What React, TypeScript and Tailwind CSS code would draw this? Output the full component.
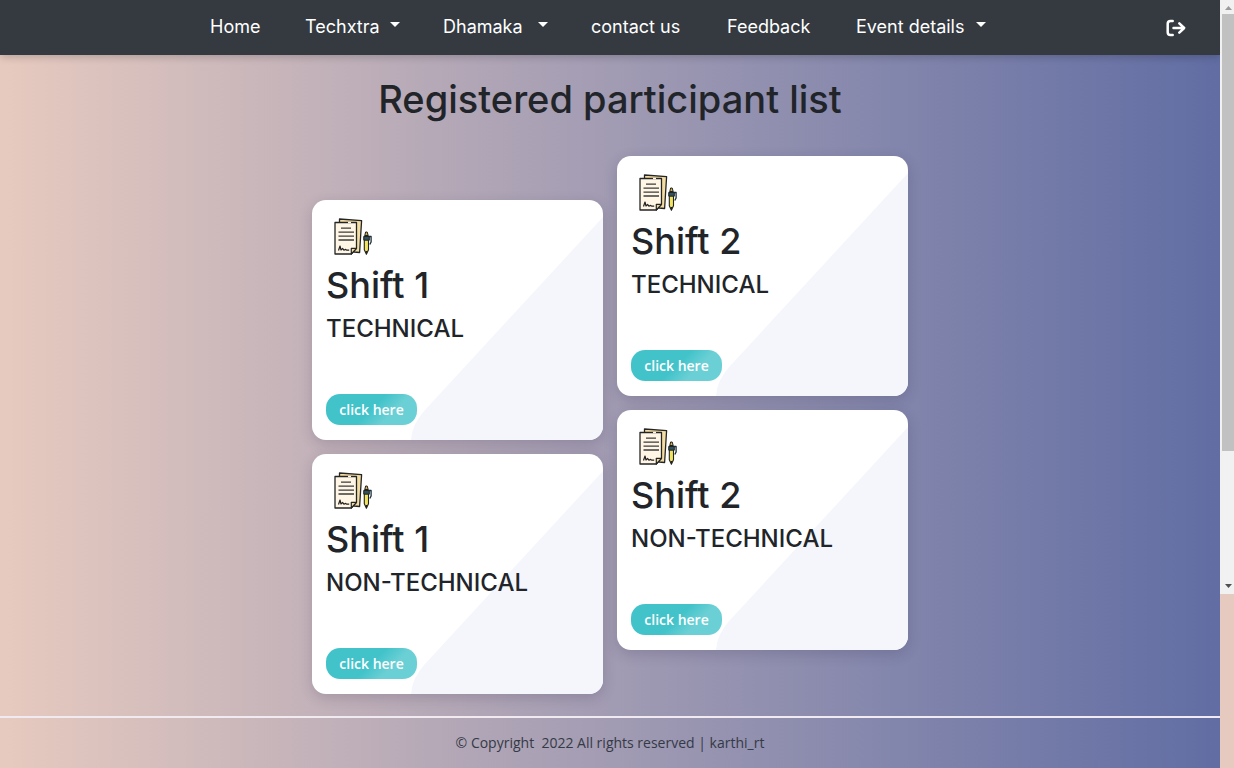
import React from "react";

type NavItem = { label: string; menu?: boolean; width: string };
type Shift = { title: string; category: string };

const navItems: NavItem[] = [
  { label: "Home", width: "w-[52px]" },
  { label: "Techxtra", menu: true, width: "w-[95px]" },
  { label: "Dhamaka", menu: true, width: "w-[105px]" },
  { label: "contact us", width: "w-[93px]" },
  { label: "Feedback", width: "w-[86px]" },
  { label: "Event details", menu: true, width: "w-[130px]" },
];

const shiftOne: Shift[] = [
  { title: "Shift 1", category: "TECHNICAL" },
  { title: "Shift 1", category: "NON-TECHNICAL" },
];

const shiftTwo: Shift[] = [
  { title: "Shift 2", category: "TECHNICAL" },
  { title: "Shift 2", category: "NON-TECHNICAL" },
];

function Caret() {
  return (
    <svg viewBox="0 0 10 5" className="mb-1 h-[5px] w-[10px] shrink-0" aria-hidden="true">
      <path d="M0 0h10L5 5z" fill="currentColor" />
    </svg>
  );
}

function LogoutIcon() {
  return (
    <svg
      viewBox="0 0 20 18"
      className="h-[18px] w-5"
      fill="none"
      stroke="currentColor"
      strokeWidth="2.5"
      strokeLinecap="round"
      strokeLinejoin="round"
      aria-hidden="true"
    >
      <path d="M6.7 2H4.5A2.8 2.8 0 0 0 1.7 4.8v8.4A2.8 2.8 0 0 0 4.5 16h2.2" />
      <path d="M7.5 9h10.3M13.3 4.3 18.2 9l-4.9 4.7" />
    </svg>
  );
}

function DocumentIcon() {
  return (
    <svg viewBox="0 0 38 37" className="ml-2 h-[37px] w-[38px]" strokeLinejoin="round" aria-hidden="true">
      <path d="M5.500 4.500V1L27.600 2.600 25.600 34.500 20 34z" fill="#f3dda3" stroke="#252525" strokeWidth="1.3" />
      <path d="M1 4.500h21.500v25.800L17.300 36H1z" fill="#fff6e6" stroke="#252525" strokeWidth="1.3" />
      <path d="M17.300 36v-5.700h5.200z" fill="#f3dda3" stroke="#252525" strokeWidth="1.2" />
      <path d="M14 4.500h3" stroke="#fff6e6" strokeWidth="1.6" />
      <path d="M7 10.200h10M4.500 14.200h15.500M4.500 18.100h15.500M4.500 22h15.500" stroke="#3c3c3c" strokeWidth="1.3" />
      <path d="M4.500 32.500 6 28l1 4 1.700-1.500 1.200 1.700 1.600-.8 1 .7h2.700" fill="none" stroke="#222" strokeWidth="1.2" />
      <path d="M30.800 17.500 31.600 14h1.600l1 3.500z" fill="#d9b23a" stroke="#222" strokeWidth="1" />
      <path d="M30.300 18h4.200v13.800l-2.100 4.400-2.100-4.400z" fill="#f2e35e" stroke="#222" strokeWidth="1.1" />
      <path d="M29.800 18.500h5.500v3.700h-5.500z" fill="#2d5260" stroke="#222" strokeWidth="1" />
      <path d="M35 18.500h2.100V24l-1.300 2.500" fill="none" stroke="#17303c" strokeWidth="1.3" />
      <path d="m31.400 33 1 3.500 1-3.500z" fill="#222" />
    </svg>
  );
}

function ShiftCard({ title, category }: Shift) {
  return (
    <article className="relative overflow-hidden rounded-[14px] bg-white px-[14px] pt-[18px] pb-[15px] shadow-[0_4px_14px_rgba(40,30,60,0.18)]">
      <svg
        viewBox="0 0 192 223"
        className="absolute right-0 bottom-0 h-[223px] w-48"
        aria-hidden="true"
      >
        <path d="M192 0 14 193Q1 207 0 223h192z" fill="#f5f6fc" />
      </svg>
      <div className="relative">
        <DocumentIcon />
        <h2 className="mt-2 text-[36px] leading-[44px] font-medium">{title}</h2>
        <h3 className="mt-2 text-[24px] leading-7 font-medium">{category}</h3>
        <button
          type="button"
          className="mt-[51px] flex h-[31px] w-[91px] items-center justify-center rounded-[14px] bg-linear-[135deg,#42c3ca_0%,#42c3ca_50%,#6bd0d5_70%,#6bd0d5_100%] font-['Open_Sans',sans-serif] text-sm font-semibold text-white"
        >
          click here
        </button>
      </div>
    </article>
  );
}

function ScrollRail() {
  return (
    <div className="flex h-[594px] w-[14px] shrink-0 flex-col items-center bg-[#f1f1f1] pl-0.5" aria-hidden="true">
      <svg viewBox="0 0 7 14" className="h-[14px] w-[7px] shrink-0">
        <path d="M0 10h7L3.500 6z" fill="#9a9a9a" />
      </svg>
      <div className="h-[437px] w-full bg-[#c1c1c1]" />
      <svg viewBox="0 0 7 14" className="mt-auto h-[14px] w-[7px] shrink-0">
        <path d="M0 4h7L3.500 8z" fill="#505050" />
      </svg>
    </div>
  );
}

export default function App() {
  return (
    <div className="flex min-h-screen bg-[#e7cabf] font-['Inter',sans-serif] text-[#212529]">
      <div className="flex min-w-0 flex-1 flex-col bg-linear-to-r from-[#e7cabf] to-[#616da3]">
        <header className="flex h-[55px] items-center bg-[#343a40] pr-[34px] pl-[30px] text-white shadow-[0_2px_8px_rgba(0,0,0,0.2)]">
          <nav className="flex flex-1 justify-center gap-[43px] pb-0.5 text-[18px] leading-6 whitespace-nowrap">
            {navItems.map((item) =>
              item.menu ? (
                <button
                  key={item.label}
                  type="button"
                  aria-haspopup="menu"
                  className={`flex items-center justify-between ${item.width}`}
                >
                  {item.label}
                  <Caret />
                </button>
              ) : (
                <a key={item.label} href="#" className={item.width}>
                  {item.label}
                </a>
              ),
            )}
          </nav>
          <button type="button" aria-label="Log out">
            <LogoutIcon />
          </button>
        </header>

        <main className="flex-1 pb-[22px]">
          <h1 className="pt-5 text-center text-[38px] leading-[48px] font-medium">Registered participant list</h1>
          <div className="mx-auto mt-[33px] grid max-w-[596px] grid-cols-2 gap-x-[14px]">
            <div className="flex flex-col gap-[14px] pt-11">
              {shiftOne.map((shift) => (
                <ShiftCard key={shift.category} {...shift} />
              ))}
            </div>
            <div className="flex flex-col gap-[14px]">
              {shiftTwo.map((shift) => (
                <ShiftCard key={shift.category} {...shift} />
              ))}
            </div>
          </div>
        </main>

        <footer className="border-t-2 border-[#f1eaf1] py-[15px] text-center font-['Open_Sans',sans-serif] text-sm leading-5 whitespace-pre text-[#343a46]">
          {"© Copyright  2022 All rights reserved | karthi_rt"}
        </footer>
      </div>
      <ScrollRail />
    </div>
  );
}
